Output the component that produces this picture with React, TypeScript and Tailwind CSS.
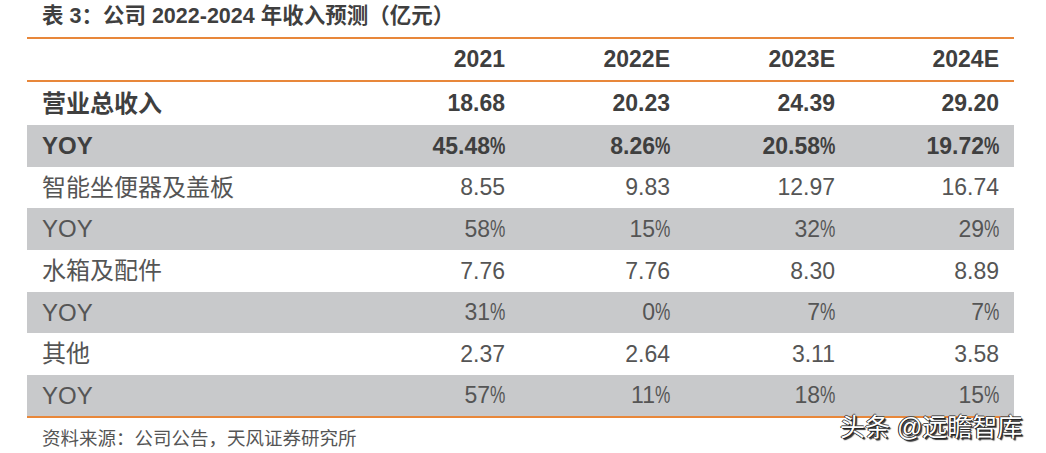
const FONT = 'font-["Liberation_Sans","Noto_Sans_CJK_SC",sans-serif]';

type Row = {
  label: string;
  values: string[];
  bold?: boolean;
  shaded?: boolean;
  h: string;
};

const rows: Row[] = [
  { label: '营业总收入', values: ['18.68', '20.23', '24.39', '29.20'], bold: true, h: 'h-[43px]' },
  { label: 'YOY', values: ['45.48%', '8.26%', '20.58%', '19.72%'], bold: true, shaded: true, h: 'h-[42px]' },
  { label: '智能坐便器及盖板', values: ['8.55', '9.83', '12.97', '16.74'], h: 'h-[41px]' },
  { label: 'YOY', values: ['58%', '15%', '32%', '29%'], shaded: true, h: 'h-[42px]' },
  { label: '水箱及配件', values: ['7.76', '7.76', '8.30', '8.89'], h: 'h-[42px]' },
  { label: 'YOY', values: ['31%', '0%', '7%', '7%'], shaded: true, h: 'h-[41px]' },
  { label: '其他', values: ['2.37', '2.64', '3.11', '3.58'], h: 'h-[42px]' },
  { label: 'YOY', values: ['57%', '11%', '18%', '15%'], shaded: true, h: 'h-[41px]' },
];

const years = ['2021', '2022E', '2023E', '2024E'];

// the % in the source is set in a narrow face
function Value({ v }: { v: string }) {
  if (!v.endsWith('%')) return <>{v}</>;
  return (
    <>
      {v.slice(0, -1)}
      <span className="inline-block w-[15px] scale-x-[0.75] origin-left">%</span>
    </>
  );
}

function TableRow({ row }: { row: Row }) {
  const text = row.bold ? 'font-bold text-[#3f3f3f]' : 'text-[#555555]';
  return (
    <div className={`grid grid-cols-[328px_165px_165px_165px_164px] items-center ${row.h} ${row.shaded ? 'bg-[#c8c9cb]' : 'bg-white'} ${text}`}>
      <div className="pl-[15px] text-[24px] leading-none">{row.label}</div>
      {row.values.map((v, i) => (
        <div key={i} className="pr-[15px] text-right text-[23px] leading-none">
          <Value v={v} />
        </div>
      ))}
    </div>
  );
}

export default function App() {
  return (
    <div className={`relative w-[1046px] h-[453px] bg-white overflow-hidden ${FONT}`}>
      {/* title */}
      <div className="h-[37px] pl-[42px] pt-[4px] text-[21.5px] font-bold leading-[24px] text-[#3f3f3f]">
        表 3：公司 2022-2024 年收入预测（亿元）
      </div>

      <div className="ml-[27px] w-[987px]">
        <div className="border-t-2 border-b-2 border-[#e8873a]">
          <div className="grid grid-cols-[328px_165px_165px_165px_164px] items-center h-[41px] font-bold text-[#3f3f3f]">
            <div />
            {years.map((y) => (
              <div key={y} className="pr-[15px] text-right text-[23px] leading-none">
                {y}
              </div>
            ))}
          </div>
        </div>
        <div className="border-b-2 border-[#e8873a]">
          {rows.map((r, i) => (
            <TableRow key={i} row={r} />
          ))}
        </div>
      </div>

      <div className="pl-[42px] pt-[10px] text-[18.5px] leading-[22px] text-[#555555]">
        资料来源：公司公告，天风证券研究所
      </div>

      {/* watermark */}
      <div className="absolute left-[840px] top-[410px] text-[25px] leading-[34px] text-white [text-shadow:1px_1px_0_#222,-1px_0_0_#222,0_-1px_0_#555,2px_2px_1px_#333] whitespace-nowrap">
        头条 @远瞻智库
      </div>
    </div>
  );
}
